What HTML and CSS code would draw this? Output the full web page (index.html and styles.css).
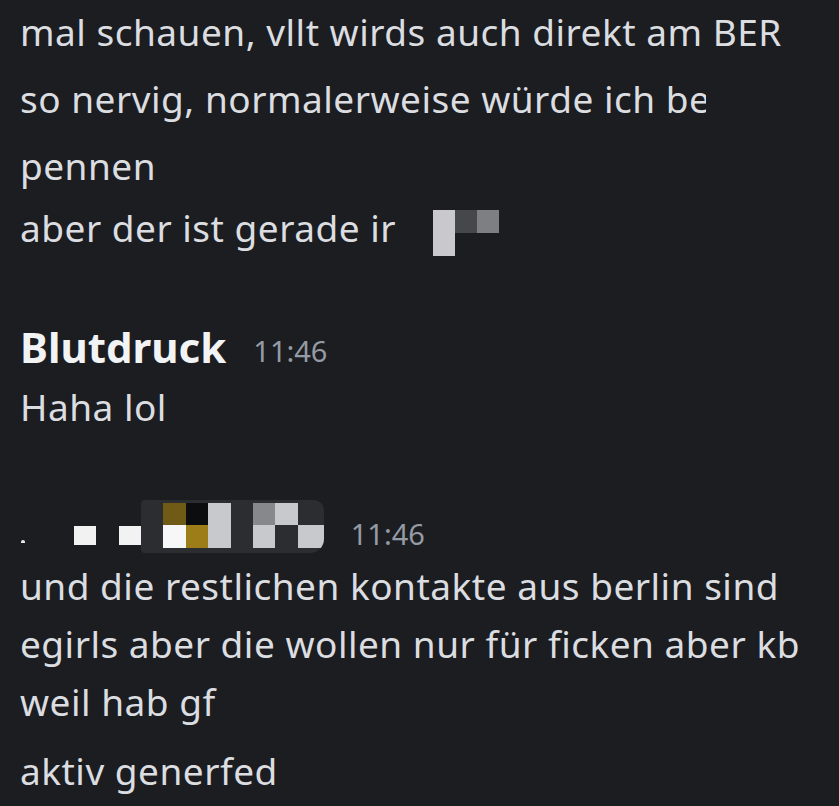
FILE: index.html
```html
<!DOCTYPE html>
<html lang="de">
<head>
    <meta charset="UTF-8">
    <meta name="viewport" content="width=device-width, initial-scale=1.0">
    <title>Chat</title>
    <link rel="stylesheet" href="styles.css">
</head>
<body>
<div class="chat">
    <div class="group first">
        <div class="msg">mal schauen, vllt wirds auch direkt am BER</div>
        <div class="msg wrap">so nervig, normalerweise würde ich b<span class="cut">e</span><br>pennen</div>
        <div class="msg tight">aber der ist gerade ir<span class="blur-inline"><span class="px tall light"></span><span class="px dark"></span><span class="px mid"></span></span></div>
    </div>

    <div class="group">
        <div class="head">
            <span class="name">Blutdruck</span>
            <span class="time">11:46</span>
        </div>
        <div class="msg after-head">Haha lol</div>
    </div>

    <div class="group">
        <div class="head">
            <span class="blur-name">
                <span class="dot"></span>
                <span class="sq"></span>
                <span class="sq"></span>
                <span class="pixbox">
                    <span class="c d"></span><span class="c olive"></span><span class="c black"></span><span class="c lg"></span><span class="c d"></span><span class="c gr"></span><span class="c lg"></span><span class="c d"></span>
                    <span class="c d"></span><span class="c white"></span><span class="c gold"></span><span class="c lg"></span><span class="c d"></span><span class="c lg"></span><span class="c d"></span><span class="c lg"></span>
                </span>
            </span>
            <span class="time low">11:46</span>
        </div>
        <div class="msg after-head">und die restlichen kontakte aus berlin sind<br>egirls aber die wollen nur für ficken aber kb<br>weil hab gf</div>
        <div class="msg spaced">aktiv generfed</div>
    </div>
</div>
</body>
</html>
```

FILE: styles.css
```css
body {
    margin: 0;
    background-color: #1c1d21;
    color: #dbdde1;
    font-family: "Noto Sans", sans-serif;
    overflow: hidden;
}
.chat {
    padding: 3px 20px 0;
}
.group {
    margin-top: 62px;
}
.group.first {
    margin-top: 0;
}
.msg {
    font-size: 37px;
    letter-spacing: 0.5px;
    line-height: 58px;
    white-space: nowrap;
}
.msg.wrap {
    line-height: 67px;
    margin-top: 4px;
}
.msg.tight {
    margin-top: 0;
}
.msg.after-head {
    margin-top: 3px;
}
.msg.spaced {
    margin-top: 11px;
}
/* last letter is cut off by the redaction */
.cut {
    display: inline-block;
    width: 17px;
    overflow: hidden;
    vertical-align: bottom;
}
.head {
    display: flex;
    align-items: center;
    height: 56px;
}
.name {
    font-size: 42px;
    line-height: 56px;
    font-weight: 700;
    color: #f2f3f5;
}
.time {
    font-size: 29px;
    color: #949ba4;
    margin-left: 27px;
    margin-top: 6px;
}
.time.low {
    margin-top: 14px;
}
.blur-inline {
    display: inline-flex;
    vertical-align: top;
    margin: 11px 0 0 37px;
}
.px {
    width: 22px;
    height: 23px;
}
.px.tall {
    height: 46px;
}
.light { background-color: #c9c9cd; }
.dark { background-color: #46474b; }
.mid { background-color: #7e7f83; }

.blur-name {
    display: flex;
    align-items: flex-end;
    height: 53px;
}
.dot {
    width: 4px;
    height: 3px;
    background-color: #e8e8e8;
    border-radius: 2px 2px 0 0;
    margin: 0 0 10px 1px;
}
.sq {
    width: 22px;
    height: 19px;
    background-color: #f2f2f2;
    margin: 0 0 8px 49px;
}
.sq + .sq {
    margin-left: 23px;
}
.pixbox {
    display: grid;
    grid-template-columns: repeat(7, 22.4px) 26px;
    grid-template-rows: 22px 23px;
    padding: 3px 0 5px;
    background-color: #2b2d31;
    border-radius: 4px 10px 14px 4px;
    overflow: hidden;
    align-self: stretch;
}
.c.d { background-color: #2b2d31; }
.c.olive { background-color: #6f5b15; }
.c.black { background-color: #0c0d0f; }
.c.lg { background-color: #c8c9cc; }
.c.gr { background-color: #87888c; }
.c.white { background-color: #f7f7f7; }
.c.gold { background-color: #9c7d17; }
```
